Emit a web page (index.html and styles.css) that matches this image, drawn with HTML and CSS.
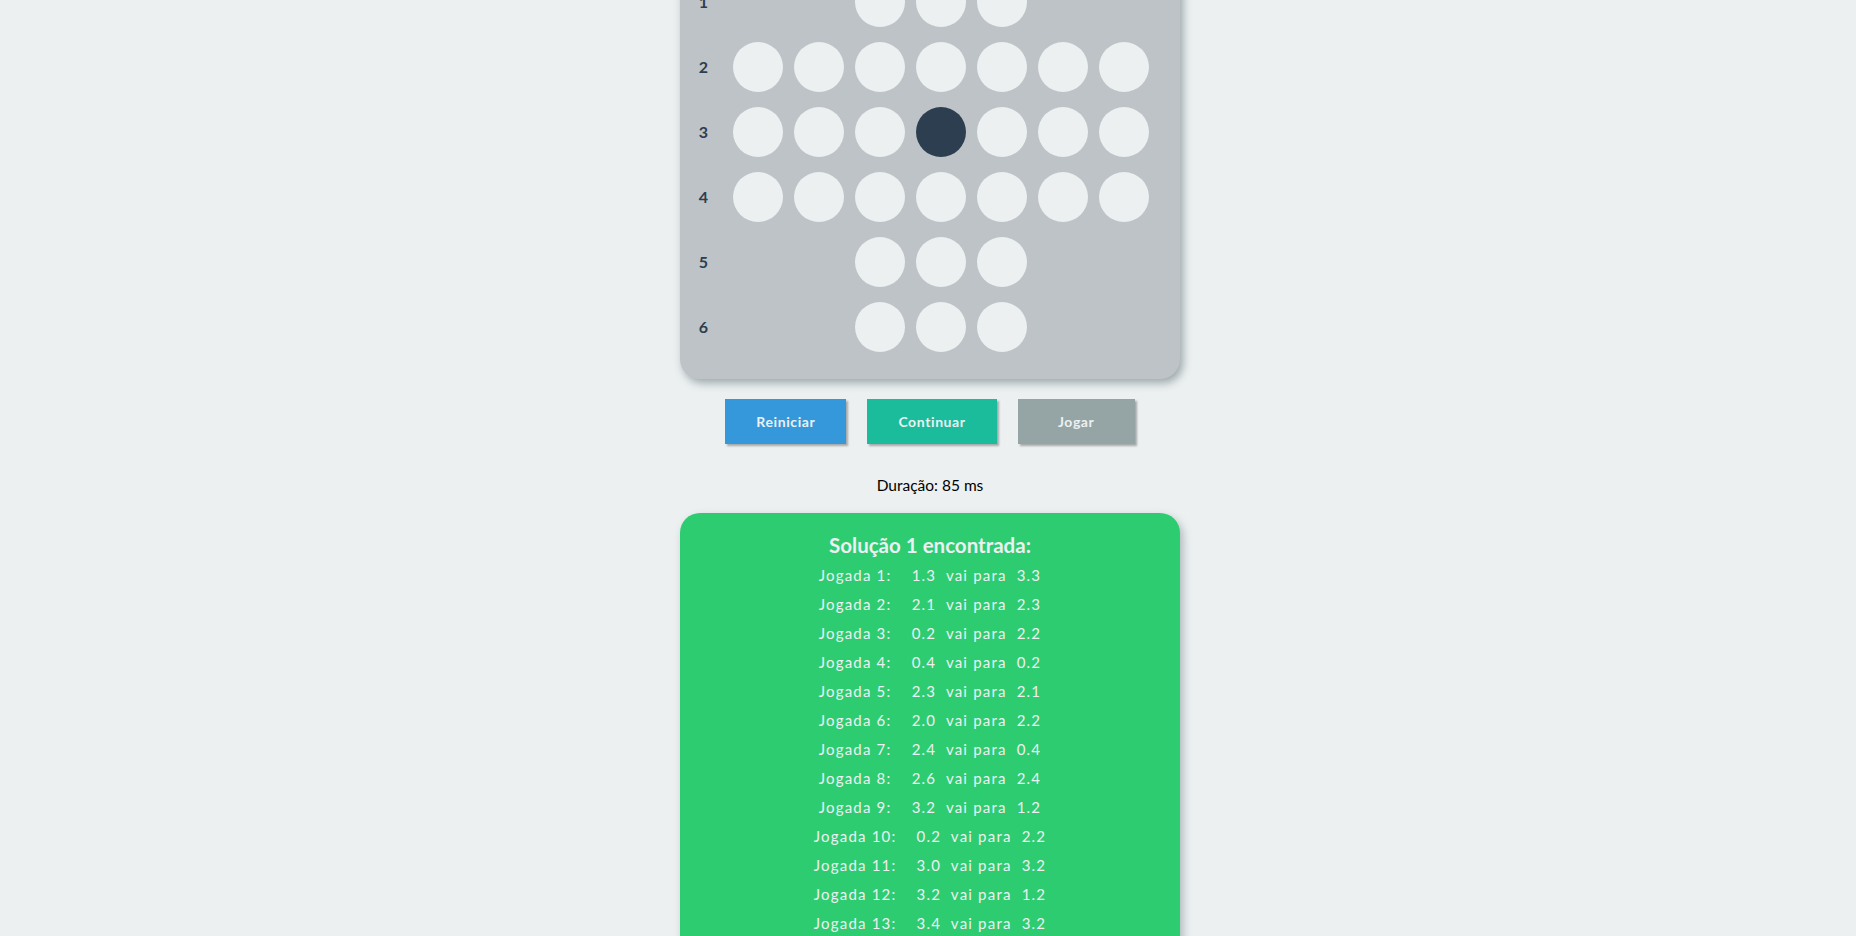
FILE: index.html
```html
<!DOCTYPE html>
<html lang="pt">
<head>
<meta charset="utf-8">
<title>Resta Um</title>
<link rel="stylesheet" href="styles.css">
</head>
<body>
<main class="page">
  <section class="board">
    <div class="row"><span class="label">0</span><div class="holes"><i class="gap"></i><i class="gap"></i><i class="peg"></i><i class="peg"></i><i class="peg"></i><i class="gap"></i><i class="gap"></i></div></div>
    <div class="row"><span class="label">1</span><div class="holes"><i class="gap"></i><i class="gap"></i><i class="peg"></i><i class="peg"></i><i class="peg"></i><i class="gap"></i><i class="gap"></i></div></div>
    <div class="row"><span class="label">2</span><div class="holes"><i class="peg"></i><i class="peg"></i><i class="peg"></i><i class="peg"></i><i class="peg"></i><i class="peg"></i><i class="peg"></i></div></div>
    <div class="row"><span class="label">3</span><div class="holes"><i class="peg"></i><i class="peg"></i><i class="peg"></i><i class="peg empty"></i><i class="peg"></i><i class="peg"></i><i class="peg"></i></div></div>
    <div class="row"><span class="label">4</span><div class="holes"><i class="peg"></i><i class="peg"></i><i class="peg"></i><i class="peg"></i><i class="peg"></i><i class="peg"></i><i class="peg"></i></div></div>
    <div class="row"><span class="label">5</span><div class="holes"><i class="gap"></i><i class="gap"></i><i class="peg"></i><i class="peg"></i><i class="peg"></i><i class="gap"></i><i class="gap"></i></div></div>
    <div class="row"><span class="label">6</span><div class="holes"><i class="gap"></i><i class="gap"></i><i class="peg"></i><i class="peg"></i><i class="peg"></i><i class="gap"></i><i class="gap"></i></div></div>
  </section>

  <div class="actions">
    <button class="btn btn-blue">Reiniciar</button>
    <button class="btn btn-teal">Continuar</button>
    <button class="btn btn-gray">Jogar</button>
  </div>

  <p class="duration">Duração: 85 ms</p>

  <section class="solution">
    <h2 class="solution-title">Solução 1 encontrada:</h2>
    <p class="move">Jogada 1:&nbsp;&nbsp;&nbsp; 1.3&nbsp; vai para&nbsp; 3.3</p>
    <p class="move">Jogada 2:&nbsp;&nbsp;&nbsp; 2.1&nbsp; vai para&nbsp; 2.3</p>
    <p class="move">Jogada 3:&nbsp;&nbsp;&nbsp; 0.2&nbsp; vai para&nbsp; 2.2</p>
    <p class="move">Jogada 4:&nbsp;&nbsp;&nbsp; 0.4&nbsp; vai para&nbsp; 0.2</p>
    <p class="move">Jogada 5:&nbsp;&nbsp;&nbsp; 2.3&nbsp; vai para&nbsp; 2.1</p>
    <p class="move">Jogada 6:&nbsp;&nbsp;&nbsp; 2.0&nbsp; vai para&nbsp; 2.2</p>
    <p class="move">Jogada 7:&nbsp;&nbsp;&nbsp; 2.4&nbsp; vai para&nbsp; 0.4</p>
    <p class="move">Jogada 8:&nbsp;&nbsp;&nbsp; 2.6&nbsp; vai para&nbsp; 2.4</p>
    <p class="move">Jogada 9:&nbsp;&nbsp;&nbsp; 3.2&nbsp; vai para&nbsp; 1.2</p>
    <p class="move">Jogada 10:&nbsp;&nbsp;&nbsp; 0.2&nbsp; vai para&nbsp; 2.2</p>
    <p class="move">Jogada 11:&nbsp;&nbsp;&nbsp; 3.0&nbsp; vai para&nbsp; 3.2</p>
    <p class="move">Jogada 12:&nbsp;&nbsp;&nbsp; 3.2&nbsp; vai para&nbsp; 1.2</p>
    <p class="move">Jogada 13:&nbsp;&nbsp;&nbsp; 3.4&nbsp; vai para&nbsp; 3.2</p>
  </section>
</main>
</body>
</html>
```

FILE: styles.css
```css
html, body {
  margin: 0;
  background: #ecf0f1;
}

body {
  padding-left: 4px;
  font-family: Lato, "Noto Sans", sans-serif;
  color: #000;
}

.page {
  width: 500px;
  margin: -115.5px auto 0;
}

.board {
  box-sizing: border-box;
  width: 500px;
  padding: 20px 0 19.5px;
  background: #bdc3c7;
  border-radius: 20px;
  box-shadow: 3px 4px 9px rgba(60, 80, 85, 0.45);
}

.row {
  display: flex;
  align-items: center;
  height: 65px;
}

.label {
  width: 47px;
  padding-bottom: 2px;
  text-align: center;
  font-size: 16px;
  font-weight: 700;
  color: #2c3e50;
}

.holes {
  display: flex;
  gap: 11px;
  padding-left: 6px;
}

.holes i {
  display: block;
  width: 50px;
  height: 50px;
  border-radius: 50%;
}

.peg {
  background: #ecf0f1;
}

.peg.empty {
  background: #2c3e50;
}

.actions {
  display: flex;
  justify-content: center;
  gap: 21px;
  margin-top: 20px;
}

.btn {
  height: 45px;
  min-width: 117px;
  padding: 0 31px;
  border: none;
  border-radius: 0;
  font-family: Lato, "Noto Sans", sans-serif;
  font-size: 14px;
  font-weight: 700;
  letter-spacing: 0.6px;
  color: #ecf0f1;
  box-shadow: 2px 2px 2px rgba(0, 0, 0, 0.3);
}

.btn-blue { background: #3498db; }
.btn-teal { background: #1abc9c; }
.btn-gray { background: #95a5a6; }

.duration {
  margin: 32px 0 0;
  text-align: center;
  font-size: 15.5px;
  line-height: 18px;
}

.solution {
  margin-top: 19px;
  padding: 20px 0 30px;
  background: #2ecc71;
  border-radius: 20px;
  box-shadow: 3px 4px 9px rgba(60, 80, 85, 0.35);
  text-align: center;
  color: #ecf0f1;
}

.solution-title {
  margin: 0 0 4px;
  font-size: 20.5px;
  line-height: 24px;
  font-weight: 700;
}

.move {
  margin: 0;
  font-size: 15px;
  line-height: 29px;
  letter-spacing: 1.2px;
}
```
